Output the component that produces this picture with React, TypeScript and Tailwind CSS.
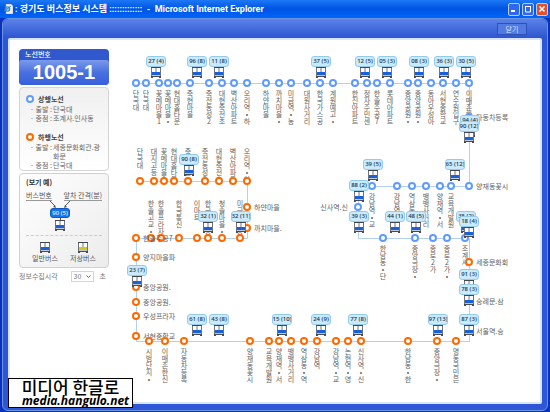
import type { ReactNode } from "react";

interface Station {
  x: number;
  y: number;
  name: string;
  side?: "below" | "above" | "aboveTall" | "right" | "left";
  down?: boolean;
}

interface BusInfo {
  x: number;
  y: number;
  label: string;
}

const row = (y: number, side: Station["side"], down: boolean, items: [number, string][]): Station[] =>
  items.map(([x, name]) => ({ x, y, name, side, down }));

const stations: Station[] = [
  ...row(43, "below", false, [
    [16, "단국대"], [26, "단국대"], [39, "꽃메마을1"], [48, "꽃메마을•"], [57, "현대홈타운"],
    [70, "죽현마을"], [89, "죽전동성2"], [102, "대현죽전초"], [114, "벽산아파트"], [127, "오리역•하"],
    [146, "하얀마을"], [159, "까치마을•"], [171, "미금역•농"], [187, "대원사거리"], [200, "한국가스공"],
    [213, "계원예고•"], [235, "한진아파트"], [247, "정자주민센"], [257, "한솔주공7"], [270, "롯데아파트"],
    [288, "중앙공원•"], [298, "중앙공원•"], [311, "동아우성아"], [323, "서현중학교"], [336, "연수원입구"],
    [349, "이매촌한"],
  ]),
  ...row(146, "below", false, [
    [252, "강남역•교"], [277, "강남역"], [292, "역삼동"], [306, "뱅뱅사거리"], [320, "양재역•서"], [331, "교육개발원"],
  ]),
  { x: 349, y: 146, name: "양재동꽃시", side: "right" },
  { x: 238, y: 167, name: "신사역.신", side: "left" },
  ...row(198, "below", false, [
    [263, "한남동•단"], [295, "중앙극장•"], [313, "종로2가"], [327, "종로2가•"], [345, "조계사•"],
  ]),
  ...row(141, "above", true, [
    [20, "단국대"], [34, "대지고등•"], [44, "꽃메마을1"], [54, "현대홈타운"], [68, "죽현마을"],
    [85, "죽전동성2"], [99, "대현죽전초"], [113, "벽산아파트"], [127, "오리역•하"],
  ]),
  { x: 127, y: 167, name: "하얀마을", side: "right", down: true },
  { x: 127, y: 188, name: "까치마을.", side: "right", down: true },
  ...row(198, "aboveTall", true, [
    [31, "한솔고교•"], [41, "한솔프라자"], [59, "한국통신"], [77, "이마트"], [88, "한국가스공"],
    [102, "청솔마을•"], [120, "미금역•농"],
  ]),
  ...([
    [198, "한솔주공7"], [217, "양지마을파"], [247, "중앙공원."], [262, "중앙공원."], [276, "우성프라자"], [296, "서현중학교"],
  ] as [number, string][]).map(([y, name]) => ({ x: 16, y, name, side: "right" as const, down: true })),
  ...row(301, "below", true, [
    [29, "시범단지•"], [45, "이매촌한신"], [64, "자동차등록"], [130, "양재동꽃시"], [149, "교육개발원"],
    [159, "양재역•서"], [171, "뱅뱅사거리"], [184, "역삼동•역"], [197, "강남역"], [216, "강남역•교"],
    [228, "논현역•영"], [241, "신사역•신"], [288, "한남동•한"], [317, "중앙극장•"], [336, "명동국민은"],
  ]),
  { x: 349, y: 222, name: "세종문화회", side: "right", down: true },
  { x: 349, y: 261, name: "숭례문.삼", side: "right", down: true },
  { x: 349, y: 291, name: "서울역.숭", side: "right", down: true },
  { x: 349, y: 77, name: "자동차등록", side: "right" },
];

const buses: BusInfo[] = [
  { x: 26, y: 16, label: "27 (4)" },
  { x: 67, y: 16, label: "96 (8)" },
  { x: 89, y: 16, label: "11 (8)" },
  { x: 191, y: 16, label: "37 (5)" },
  { x: 235, y: 16, label: "12 (5)" },
  { x: 257, y: 16, label: "05 (3)" },
  { x: 289, y: 16, label: "08 (3)" },
  { x: 314, y: 16, label: "36 (3)" },
  { x: 336, y: 16, label: "30 (5)" },
  { x: 340, y: 75, label: "94 (4)" },
  { x: 339, y: 81, label: "90 (12)" },
  { x: 59, y: 114, label: "90 (8)" },
  { x: 243, y: 119, label: "39 (5)" },
  { x: 325, y: 119, label: "65 (12)" },
  { x: 229, y: 140, label: "88 (2)" },
  { x: 229, y: 171, label: "39 (3)" },
  { x: 78, y: 171, label: "32 (1)" },
  { x: 111, y: 171, label: "32 (11)" },
  { x: 265, y: 171, label: "44 (1)" },
  { x: 286, y: 171, label: "48 (5)" },
  { x: 336, y: 171, label: "35 (2)" },
  { x: 339, y: 176, label: "18 (4)" },
  { x: 7, y: 225, label: "23 (7)" },
  { x: 339, y: 229, label: "91 (3)" },
  { x: 339, y: 244, label: "78 (3)" },
  { x: 67, y: 274, label: "61 (8)" },
  { x: 89, y: 274, label: "43 (8)" },
  { x: 152, y: 274, label: "15 (10)" },
  { x: 191, y: 274, label: "24 (9)" },
  { x: 228, y: 274, label: "77 (8)" },
  { x: 308, y: 274, label: "97 (13)" },
  { x: 339, y: 274, label: "87 (3)" },
];

const labelClass = {
  below: "left-1/2 top-full mt-[3px] w-[7px] -translate-x-1/2 break-all text-center",
  above: "left-1/2 bottom-1/2 h-[33px] w-[7px] -translate-x-1/2 break-all text-center",
  aboveTall: "left-1/2 bottom-1/2 h-[38px] w-[7px] -translate-x-1/2 break-all text-center",
  right: "left-full top-1/2 ml-[3px] -translate-y-1/2 whitespace-nowrap",
  left: "right-full top-1/2 mr-[6px] -translate-y-1/2 whitespace-nowrap",
};

function BusIcon({ color = "#1860dc" }: { color?: string }) {
  return (
    <svg width="10" height="11" viewBox="0 0 10 11" className="block">
      <path d="M1 0h8v10H1z" fill="#fff" />
      <path d="M0 0.5h10" stroke="#44464e" />
      <path d="M0.5 1v8M9.5 1v8M5 1v4" stroke="#70747e" />
      <rect x="1" y="5" width="8" height="3" fill={color} />
      <path d="M1 8.5h8" stroke="#c4c8d0" />
      <path d="M0 9h2v2H0zM8 9h2v2H8zM2 9h6v1H2z" fill="#4a4c54" />
    </svg>
  );
}

function Ring({ down }: { down?: boolean }) {
  return (
    <span
      className={`block h-2 w-2 shrink-0 rounded-full border-2 bg-white ${down ? "border-[#ff6a00]" : "border-[#5f9bff]"}`}
    />
  );
}

function Badge({ label }: { label: string }) {
  return (
    <span className="flex h-[11px] w-5 shrink-0 items-center justify-center overflow-hidden whitespace-nowrap rounded-[3px] border border-[#94cbec] bg-[#c9eaff] font-['Noto_Sans'] text-[6px] font-medium text-[#183040]">
      {label}
    </span>
  );
}

function RouteMap() {
  return (
    <main className="relative min-h-[362px] flex-1 text-[7px] leading-[7px] text-[#626262]">
      <svg className="absolute left-0 top-0" width="400" height="350" fill="none" stroke="#b3d0f3">
        <path d="M16 43.5H349.5V146.5H238.5V198.5H349.5V301.5H16.5V198.5H127.5V141.5H20" />
      </svg>
      {stations.map((s, i) => (
        <div key={i} className="absolute h-0 w-0" style={{ left: s.x - 4, top: s.y - 4 }}>
          <div className="relative h-2 w-2">
            <span className={`absolute ${labelClass[s.side ?? "below"]}`}>{s.name}</span>
            <div className="relative">
              <Ring down={s.down} />
            </div>
          </div>
        </div>
      ))}
      {buses.map((b, i) => (
        <div key={i} className="absolute flex w-5 flex-col items-center" style={{ left: b.x, top: b.y }}>
          <Badge label={b.label} />
          <BusIcon />
        </div>
      ))}
    </main>
  );
}

function RouteInfo({ title, start, end, down }: { title: string; start: string; end: string; down?: boolean }) {
  return (
    <section>
      <h2 className="flex items-center gap-1 text-[7px] font-bold leading-[12px] text-[#444]">
        <Ring down={down} />
        {title}
      </h2>
      <dl className="grid grid-cols-[23px_1fr] pl-1 text-[7px] leading-[9px] text-[#666]">
        <dt className="whitespace-nowrap">· 출발 :</dt>
        <dd className="break-all">{start}</dd>
        <dt className="whitespace-nowrap">· 종점 :</dt>
        <dd className="break-all">{end}</dd>
      </dl>
    </section>
  );
}

function Sidebar() {
  return (
    <aside className="flex w-[90px] shrink-0 flex-col">
      <div className="overflow-hidden rounded-[4px] bg-[#3159cd] text-white">
        <p className="px-[6px] text-[7px] font-medium leading-[11px]">노선번호</p>
        <h1 className="rounded-[3px] bg-linear-to-b from-[#7b9aec] via-[#4a70df] to-[#3560dc] text-center font-['Liberation_Sans'] text-[20px] font-bold leading-[25px]">
          1005-1
        </h1>
      </div>
      <div className="mt-[2px] flex flex-col gap-2 rounded-[4px] border border-[#d4d4d4] bg-linear-to-b from-[#f0f0f0] to-white px-[6px] pt-[5px]">
        <RouteInfo title="상행노선" start="단국대" end="조계사.인사동" />
        <RouteInfo title="하행노선" start="세종문화회관.광화문" end="단국대" down />
      </div>
      <div className="mt-[2px] rounded-[4px] border border-[#d0d0d0] bg-linear-to-br from-white to-[#ececec] px-[6px] pb-[4px] text-[7px] leading-[9px] text-[#555]">
        <h3 className="pt-1 font-bold text-[#333]">(보기 예)</h3>
        <div className="mt-[4px] flex justify-between whitespace-nowrap">
          <span className="border-b border-[#999]">버스번호</span>
          <span className="border-b border-[#999]">앞차 간격(분)</span>
        </div>
        <div className="flex w-[68px] flex-col items-center">
          <svg width="24" height="7" viewBox="0 0 24 7" stroke="#555" fill="#555">
            <path d="M2 0L7 5M22 0L17 5" />
            <path d="M8 7L7 4L5 6ZM16 7L17 4L19 6Z" stroke="none" />
          </svg>
          <span className="flex h-[10px] w-5 items-center justify-center whitespace-nowrap rounded-[3px] border border-[#1558bd] bg-[#1874ec] font-['Noto_Sans'] text-[6px] text-white">
            90 (5)
          </span>
          <span className="h-[2px] w-px bg-[#555]" />
          <BusIcon />
        </div>
        <hr className="mt-[4px] border-dashed border-[#ccc]" />
        <div className="mt-[6px] flex justify-around">
          <div className="flex flex-col items-center gap-px">
            <BusIcon />
            일반버스
          </div>
          <div className="flex flex-col items-center gap-px">
            <BusIcon color="#d3ca16" />
            저상버스
          </div>
        </div>
      </div>
      <div className="mt-[2px] flex items-center text-[7px] leading-[12px] text-[#777]">
        <label htmlFor="interval" className="flex-1 whitespace-nowrap">정보수집시각</label>
        <div className="relative">
          <select id="interval" defaultValue="30" className="block h-[11px] w-[23px] appearance-none border border-[#d5d5d5] bg-white pl-[2px] text-[7px] leading-[9px]">
            <option>30</option>
            <option>60</option>
          </select>
          <svg className="pointer-events-none absolute right-[3px] top-[4px]" width="5" height="4" fill="none" stroke="#666">
            <path d="M0.5 0.5L2.5 2.5L4.5 0.5" />
          </svg>
        </div>
        <span className="ml-[6px] mr-[3px]">초</span>
      </div>
    </aside>
  );
}

function WindowButton({ label, close, children }: { label: string; close?: boolean; children: ReactNode }) {
  return (
    <button
      aria-label={label}
      className={`flex h-[13px] w-3 items-center justify-center rounded-[2px] border border-[#b5ccff] ${close ? "bg-[#e0512c]" : "bg-[#2f68ec]"}`}
    >
      <svg width="8" height="8" viewBox="0 0 8 8" fill="none" stroke="#fff">
        {children}
      </svg>
    </button>
  );
}

export default function App() {
  return (
    <div className="relative flex min-h-screen flex-col overflow-hidden bg-[#0831bd] font-['Noto_Sans_CJK_KR',sans-serif]">
      <header className="flex h-[18px] items-center gap-[2px] bg-linear-to-b from-[#1d78f5] via-[#0053e2] to-[#0065fb] pl-1 pr-[2px] text-white">
        <svg width="9" height="10" viewBox="0 0 9 10">
          <path d="M2 0h5l2 2v8H2z" fill="#f1f1e4" stroke="#aaa" strokeWidth=".5" />
          <circle cx="3.5" cy="5" r="2.2" fill="none" stroke="#3188d8" strokeWidth="1.3" />
          <path d="M1.5 5h4M0 7Q3 5 7 2" stroke="#3188d8" fill="none" />
        </svg>
        <span className="flex-1 truncate font-['Roboto','Noto_Sans_CJK_KR',sans-serif] text-[9px] font-bold leading-[16px]">
          : 경기도 버스정보 시스템 :::::::::::::&nbsp; -&nbsp; Microsoft Internet Explorer
        </span>
        <div className="flex gap-[2px]">
          <WindowButton label="최소화">
            <path d="M1 6h4" strokeWidth="2" />
          </WindowButton>
          <WindowButton label="최대화">
            <path d="M1 1.5h6M1.5 1v6h5V1" />
          </WindowButton>
          <WindowButton label="창 닫기" close>
            <path d="M1.5 1.5l5 5M6.5 1.5l-5 5" strokeWidth="1.5" />
          </WindowButton>
        </div>
      </header>
      <div className="mx-[2px] mb-[2px] flex flex-1 flex-col rounded-md border border-[#6c94dc] bg-[#2e57d7] px-[5px] pb-[6px]">
        <div className="-mx-[5px] flex h-[19px] items-center justify-end rounded-t-md bg-linear-to-b from-[#5c82eb] to-[#2e55ce] pr-[20px]">
          <button className="h-3 w-[30px] border border-[#2f50b8] bg-[#527ae3] text-[7px] leading-[10px] text-[#dbe6ff]">
            닫기
          </button>
        </div>
        <div className="flex flex-1 gap-[11px] rounded-[2px] border-2 border-[#d7e4fa] bg-white pl-[9px]">
          <div className="pt-[9px]">
            <Sidebar />
          </div>
          <RouteMap />
        </div>
      </div>
      <footer className="absolute bottom-[5px] left-2 flex h-[30px] w-[125px] flex-col items-center justify-center border border-black bg-white text-black">
        <span className="whitespace-nowrap text-[17px] font-medium leading-[15px]">미디어 한글로</span>
        <span className="self-end pr-[3px] font-['Open_Sans'] text-[12px] font-bold italic leading-[13px]">media.hangulo.net</span>
      </footer>
    </div>
  );
}
